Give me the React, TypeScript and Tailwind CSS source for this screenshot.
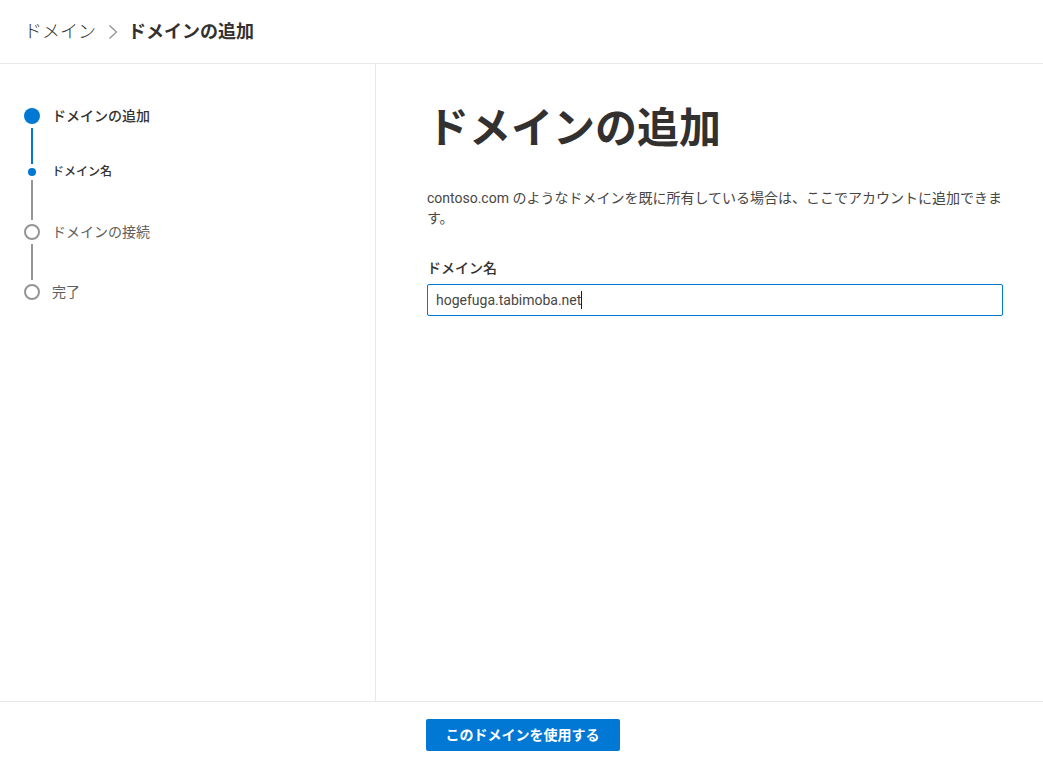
const font = "font-['Roboto','Noto_Sans_CJK_JP',sans-serif]"

export default function App() {
  return (
    <div className={`h-[765px] w-[1043px] flex flex-col bg-white text-[#323130] overflow-hidden ${font}`}>
      {/* Breadcrumb */}
      <div className="h-[64px] shrink-0 border-b border-[#e8e8e8] flex items-center pl-6 text-[18px]">
        <span className="font-light">ドメイン</span>
        <svg className="ml-[12px] mr-[10px] w-[10px] h-[16px]" viewBox="0 0 10 16" fill="none" stroke="#8a8886" strokeWidth="1.1">
          <path d="M1.5 1.5 L8.5 8 L1.5 14.5" />
        </svg>
        <span className="font-bold">ドメインの追加</span>
      </div>

      <div className="flex-1 flex min-h-0">
        {/* Steps */}
        <div className="w-[376px] shrink-0 border-r border-[#e8e8e8] pl-6 pt-[44px]">
          <div className="flex h-[16px] items-center">
            <div className="w-4 h-4 rounded-full bg-[#0078d4] shrink-0" />
            <span className="ml-3 text-[14px] font-medium text-[#323130]">ドメインの追加</span>
          </div>
          <div className="w-4 flex justify-center pt-1">
            <div className="w-[2px] h-[36px] bg-[#0078d4]" />
          </div>
          <div className="flex h-[8px] items-center mt-1">
            <div className="w-4 flex justify-center shrink-0">
              <div className="w-2 h-2 rounded-full bg-[#0078d4]" />
            </div>
            <span className="ml-3 text-[12px] font-medium">ドメイン名</span>
          </div>
          <div className="w-4 flex justify-center pt-1">
            <div className="w-[2px] h-[40px] bg-[#979593]" />
          </div>
          <div className="flex h-[16px] items-center mt-1">
            <div className="w-4 h-4 rounded-full border-2 border-[#979593] shrink-0" />
            <span className="ml-3 text-[14px] text-[#605e5c]">ドメインの接続</span>
          </div>
          <div className="w-4 flex justify-center pt-1">
            <div className="w-[2px] h-[36px] bg-[#979593]" />
          </div>
          <div className="flex h-[16px] items-center mt-1">
            <div className="w-4 h-4 rounded-full border-2 border-[#979593] shrink-0" />
            <span className="ml-3 text-[14px] text-[#605e5c]">完了</span>
          </div>
        </div>

        {/* Main */}
        <div className="flex-1 pl-[51px] pr-[40px] pt-[37px]">
          <h1 className="text-[42px] font-bold leading-[56px]">ドメインの追加</h1>
          <p className="mt-[31px] text-[14px] leading-[20px] w-[576px] text-[#484644]">
            contoso.com のようなドメインを既に所有している場合は、ここでアカウントに追加できます。
          </p>
          <label className="block mt-[30px] text-[14px] font-medium leading-[20px]">ドメイン名</label>
          <div className="mt-[6px] w-[576px] h-[32px] border border-[#0078d4] rounded-[2px] flex items-center pl-2 text-[14px] text-[#484644]">
            <span className="pt-px">hogefuga.tabimoba.net</span>
            <span className="w-px h-[18px] bg-[#201f1e]" />
          </div>
        </div>
      </div>

      {/* Footer */}
      <div className="h-[64px] shrink-0 border-t border-[#e8e8e8] flex justify-center pt-[17px] pl-[2px]">
        <button className="w-[194px] h-[32px] bg-[#0078d4] rounded-[2px] text-white text-[14px] font-bold">
          このドメインを使用する
        </button>
      </div>
    </div>
  )
}
